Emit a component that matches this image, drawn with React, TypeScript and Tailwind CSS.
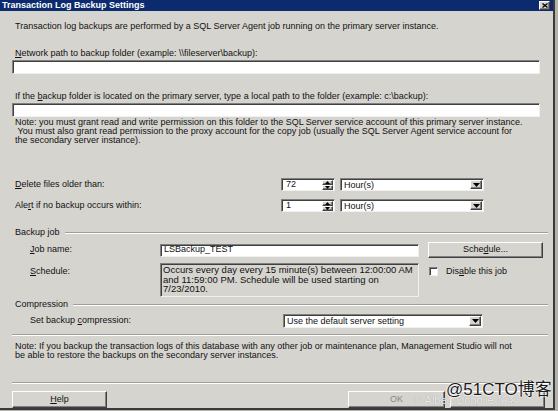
import React from "react";

// Classic Win2k-style dialog for log shipping backup settings
const sunkenEdge =
  "border border-t-[#808080] border-l-[#808080] border-r-[#f0f0f0] border-b-[#f0f0f0] shadow-[inset_1px_1px_0_#404040]";
const sunken = `bg-white ${sunkenEdge}`;
const raised =
  "bg-[#d6d4cf] border border-t-white border-l-white border-r-[#404040] border-b-[#404040] shadow-[inset_-1px_-1px_0_#808080]";

function U({ children }: { children: React.ReactNode }) {
  return <span className="underline underline-offset-1">{children}</span>;
}

function Etched({ className = "" }: { className?: string }) {
  return <div className={`h-[2px] border-t border-t-[#a09e99] border-b border-b-white ${className}`} />;
}

function DropButton() {
  return (
    <div className={`${raised} w-[12px] h-full flex items-center justify-center`}>
      <svg width="7" height="4" viewBox="0 0 7 4">
        <path d="M0 0h7L3.5 4z" fill="#000" />
      </svg>
    </div>
  );
}

function Combo({ value, width }: { value: string; width: string }) {
  return (
    <div className={`${sunken} ${width} h-full flex items-stretch p-[1px]`}>
      <div className="flex-1 pl-[2px] leading-[10px] flex items-center">{value}</div>
      <DropButton />
    </div>
  );
}

function Spinner({ value }: { value: string }) {
  return (
    <div className={`${sunken} w-[54px] h-full flex items-stretch p-[1px]`}>
      <div className="flex-1 pl-[3px] flex items-center">{value}</div>
      <div className="w-[11px] flex flex-col">
        <div className={`${raised} flex-1 flex items-center justify-center`}>
          <svg width="5" height="3" viewBox="0 0 5 3">
            <path d="M0 3h5L2.5 0z" fill="#000" />
          </svg>
        </div>
        <div className={`${raised} flex-1 flex items-center justify-center`}>
          <svg width="5" height="3" viewBox="0 0 5 3">
            <path d="M0 0h5L2.5 3z" fill="#000" />
          </svg>
        </div>
      </div>
    </div>
  );
}

function GroupHeader({ title }: { title: string }) {
  return (
    <div className="flex items-center h-[11px] pl-[15px] pr-[5px]">
      <span className="whitespace-nowrap">{title}</span>
      <Etched className="flex-1 ml-[5px]" />
    </div>
  );
}

export default function App() {
  return (
    <div className="w-[558px] h-[411px] bg-[#b5b3ae] overflow-hidden font-['Liberation_Sans',Arial,sans-serif] text-[9px] text-[#111]">
      <div className="relative w-[555px] h-[410px] border-r-2 border-b-2 border-[#3a3a3a] bg-[#d6d4cf] flex flex-col">
        {/* title bar */}
        <div className="h-[11px] bg-[#0c2a6e] flex items-center pl-[2px] pr-[3px] shrink-0">
          <span className="text-white font-bold text-[9px] leading-[11px] whitespace-nowrap">
            Transaction Log Backup Settings
          </span>
          <div className={`${raised} ml-auto w-[11px] h-[9px] flex items-center justify-center`}>
            <svg width="6" height="5" viewBox="0 0 6 5">
              <path d="M0.5 0.5l5 4M5.5 0.5l-5 4" stroke="#000" strokeWidth="1.3" />
            </svg>
          </div>
        </div>

        <div className="mt-[10px] h-[11px] leading-[11px] pl-[15px] whitespace-nowrap">
          Transaction log backups are performed by a SQL Server Agent job running on the primary server instance.
        </div>

        <div className="mt-[16px] h-[11px] leading-[11px] pl-[15px] whitespace-nowrap">
          <U>N</U>etwork path to backup folder (example: \\fileserver\backup):
        </div>
        <div className={`${sunken} mt-[1px] ml-[12px] w-[528px] h-[14px]`} />

        <div className="mt-[17px] h-[11px] leading-[11px] pl-[15px] whitespace-nowrap">
          If the <U>b</U>ackup folder is located on the primary server, type a local path to the folder (example: c:\backup):
        </div>
        <div className={`${sunken} mt-[1px] ml-[12px] w-[528px] h-[14px]`} />

        <div className="mt-[1px] pl-[15px] leading-[9px] whitespace-nowrap">
          <div>
            Note: you must grant read and write permission on this folder to the SQL Server service account of this primary server instance.
          </div>
          <div>&nbsp;You must also grant read permission to the proxy account for the copy job (usually the SQL Server Agent service account for</div>
          <div>the secondary server instance).</div>
        </div>

        {/* retention */}
        <div className="mt-[33px] h-[13px] flex items-stretch">
          <div className="w-[281px] pl-[15px] flex items-center">
            <span>
              <U>D</U>elete files older than:
            </span>
          </div>
          <Spinner value="72" />
          <div className="ml-[5px] h-full">
            <Combo value="Hour(s)" width="w-[144px]" />
          </div>
        </div>
        <div className="mt-[8px] h-[13px] flex items-stretch">
          <div className="w-[281px] pl-[15px] flex items-center">
            <span>
              Ale<U>r</U>t if no backup occurs within:
            </span>
          </div>
          <Spinner value="1" />
          <div className="ml-[5px] h-full">
            <Combo value="Hour(s)" width="w-[144px]" />
          </div>
        </div>

        <div className="mt-[15px]">
          <GroupHeader title="Backup job" />
        </div>
        <div className="mt-[4px] h-[16px] flex items-center">
          <div className="w-[160px] pl-[30px]">
            <U>J</U>ob name:
          </div>
          <div className={`${sunken} w-[259px] h-[13px] pl-[3px] flex items-center`}>LSBackup_TEST</div>
          <div className={`${raised} ml-[9px] w-[115px] h-[16px] flex items-center justify-center`}>
            <span>
              Sche<U>d</U>ule...
            </span>
          </div>
        </div>
        <div className="mt-[5px] flex items-start">
          <div className="w-[160px] pl-[30px] pt-[2px]">
            <U>S</U>chedule:
          </div>
          <div className={`${sunkenEdge} bg-[#d6d4cf] w-[259px] h-[34px] pl-[2px] pt-[1px] leading-[9.5px] text-[9.5px] whitespace-nowrap`}>
            <div>Occurs every day every 15 minute(s) between 12:00:00 AM</div>
            <div>and 11:59:00 PM. Schedule will be used starting on</div>
            <div>7/23/2010.</div>
          </div>
          <div className="ml-[10px] mt-[2px] flex items-center">
            <div className={`${sunken} w-[9px] h-[9px]`} />
            <span className="ml-[8px]">
              Dis<U>a</U>ble this job
            </span>
          </div>
        </div>

        <div className="mt-[2px]">
          <GroupHeader title="Compression" />
        </div>
        <div className="mt-[4px] h-[14px] flex items-stretch">
          <div className="w-[283px] pl-[30px] flex items-center">
            <span>
              Set backup <U>c</U>ompression:
            </span>
          </div>
          <Combo value="Use the default server setting" width="w-[200px]" />
        </div>

        <Etched className="mt-[6px] ml-[12px] w-[536px]" />

        <div className="mt-[6px] pl-[15px] leading-[9px] whitespace-nowrap">
          <div>
            Note: If you backup the transaction logs of this database with any other job or maintenance plan, Management Studio will not
          </div>
          <div>be able to restore the backups on the secondary server instances.</div>
        </div>

        <Etched className="mt-[22px] ml-[12px] w-[536px]" />

        <div className="mt-[7px] h-[17px] flex items-stretch">
          <div className={`${raised} ml-[12px] w-[95px] flex items-center justify-center`}>
            <span>
              <U>H</U>elp
            </span>
          </div>
          <div className={`${raised} ml-[241px] w-[97px] flex items-center justify-center text-[#8a8884]`}>
            OK
          </div>
          {/* cancel button, its caption lies under the watermark */}
          <div className={`${raised} ml-[5px] w-[95px]`} />
        </div>

        {/* blog watermark over the button row */}
        <div className="absolute left-[414px] top-[394px] text-[11px] leading-[12px] text-white/80 whitespace-nowrap [text-shadow:0_0_1px_#888]">
          © Albert Dongjie 博客
        </div>
        <div className="absolute left-[446px] top-[380px] text-[17px] leading-[20px] text-[#1a1a1a] whitespace-nowrap font-['Liberation_Sans','Noto_Sans_CJK_SC',sans-serif] [text-shadow:0_0_2px_#fff,0_0_2px_#fff,0_0_1px_#fff]">
          @51CTO博客
        </div>
      </div>
    </div>
  );
}
